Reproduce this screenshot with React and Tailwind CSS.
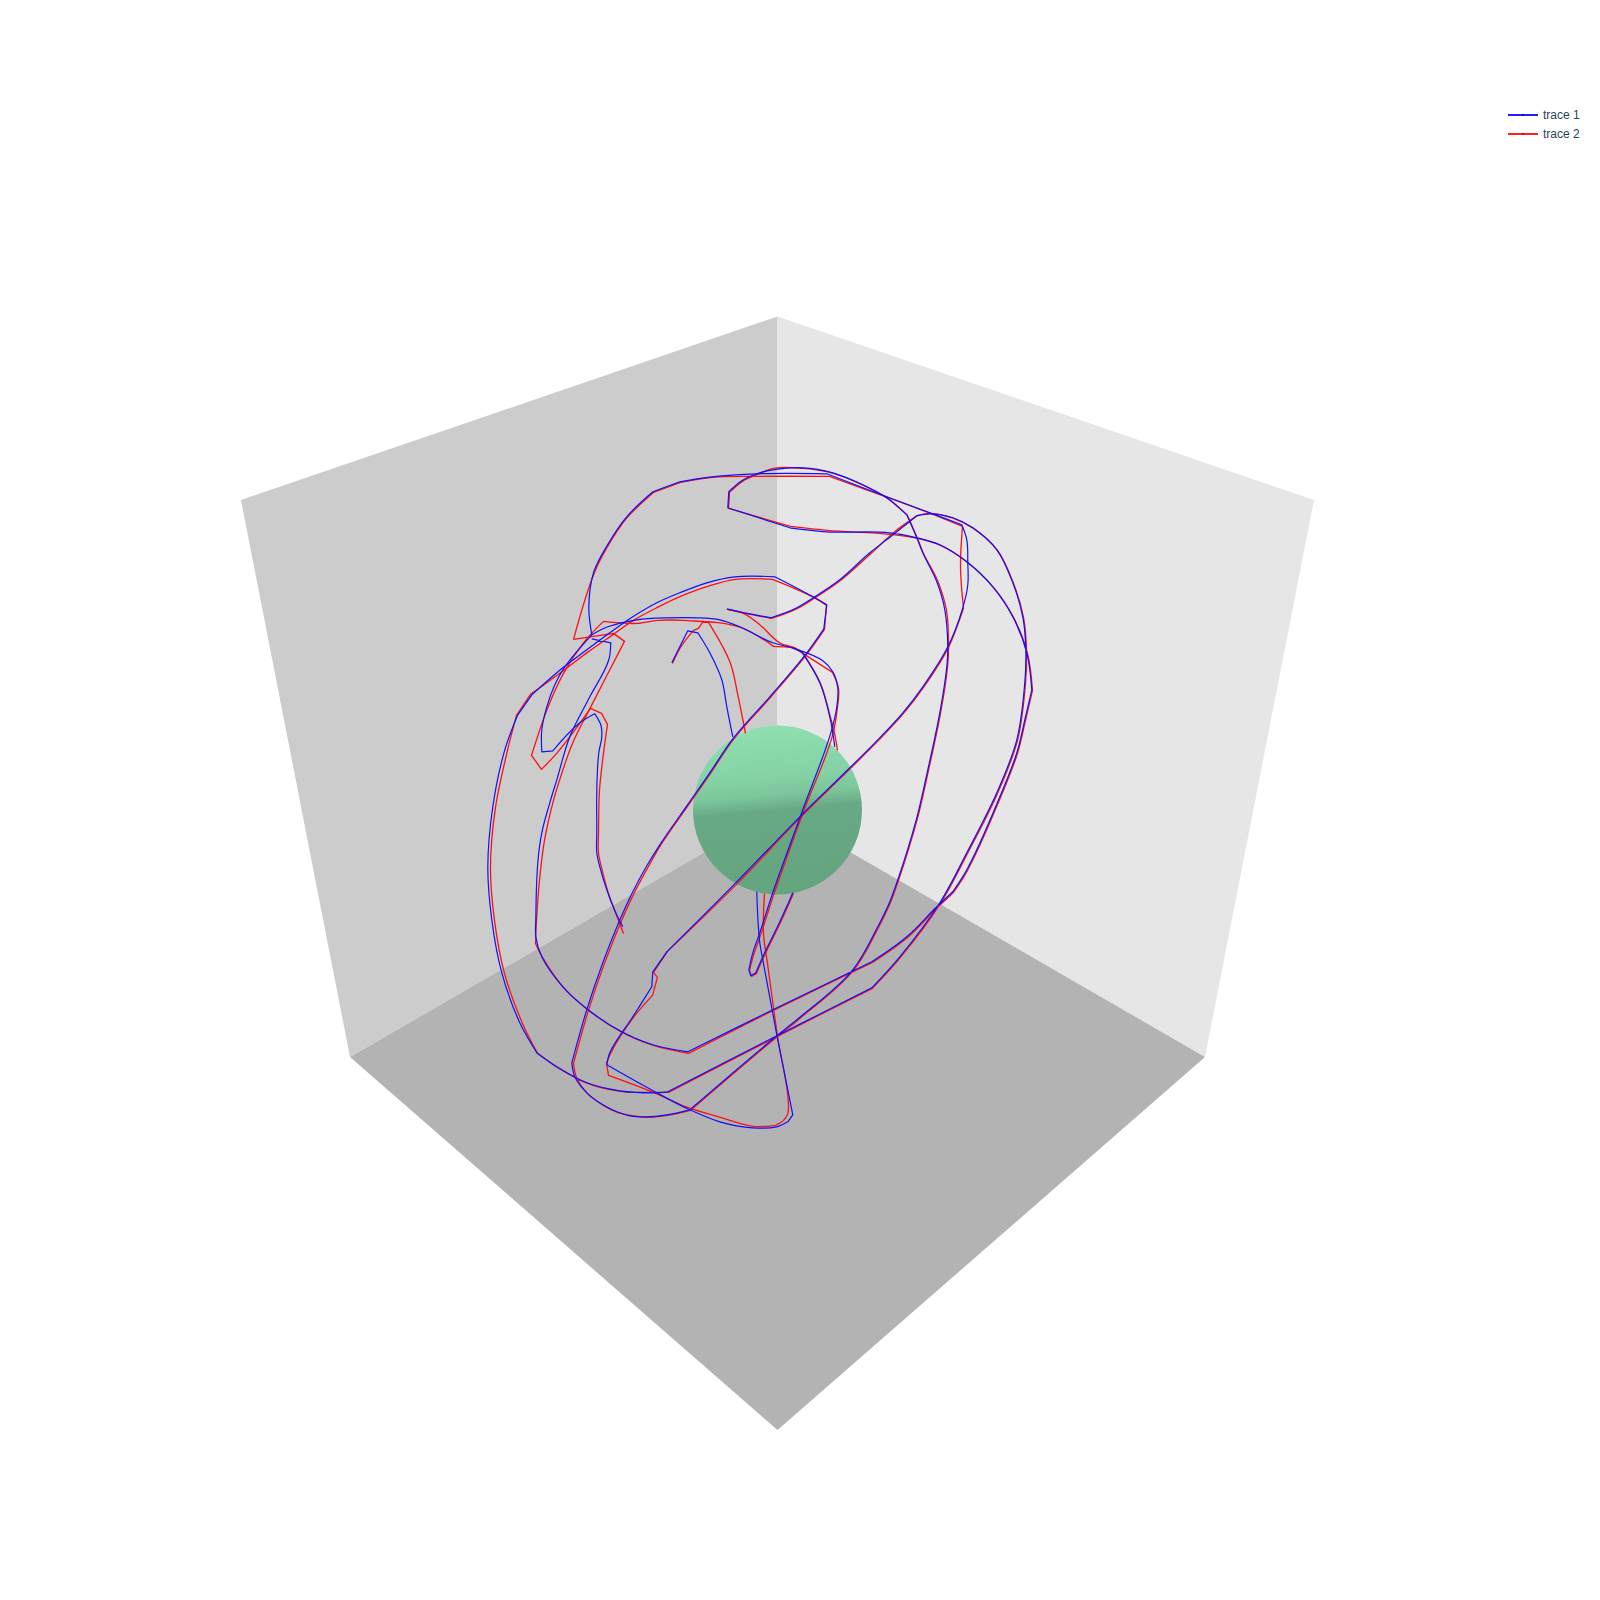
// "!" marks a hard corner in the trace
const blueLines = [
  "623,927 615,911 607,890 600,867 597,853 597,833 597,790 599,753 602,737 601,725 595,714 580,723 553,751 542,752 542,730 547,707 555,685 565,667 592,635 589,607 594,572 606,548 626,518 653,492! 680,482! 712,477 757,474 827,474! 887,497 930,513 962,525 967,540 968,563 968,585 963,608 948,647 923,687 903,713 878,740 850,768 802,815 735,884 667,952! 653,972 652,987 633,1017 610,1053 607,1065 657,1093 690,1110 720,1122 753,1128 777,1127 788,1122 793,1115 777,1035 763,960 760,943 757,892",
  "733,737 727,707 722,680 710,653 698,633 688,631 672,663",
  "592,639 611,643 609,660 590,697 570,737 557,780 550,803 542,833 538,863 536,920 536,937 542,957 563,987 587,1009 620,1031 653,1045 688,1052! 773,1010 872,962! 907,937 937,907 953,892! 967,870 1000,797 1017,753 1025,720 1032,690! 1027,653 1013,617 993,587 967,562 940,545 917,538 890,533 827,532 790,528! 728,508 729,492 742,481 757,474 773,470 803,468 833,473 863,485 887,498 907,515 917,538 923,553 937,582 945,610 948,647 947,667 940,713 928,770 917,818 897,883 890,902 878,927 853,970 797,1020 777,1036 690,1110 667,1115 647,1117 630,1116 617,1112 603,1105 587,1093 575,1077 572,1063 587,1010 603,963 618,925 633,892 647,866 660,845 687,806 710,773 733,739 770,697 807,653 824,629 827,605 815,598 775,577! 735,577 707,583 680,593 657,603 633,617 610,633 587,650 563,668 532,695! 518,715! 505,750 493,807 488,867 492,920 502,973 520,1023 537,1053 557,1067 587,1083 620,1091 653,1093 668,1092! 777,1036 872,988! 900,957 940,903 967,853 997,793 1017,740 1025,683 1026,650 1023,617 1013,583 997,550 973,528 953,518 930,514 917,516 892,536 870,553 840,580 815,597 795,609 771,618 740,612 727,609",
  "592,635 608,627 637,620 667,618 697,618 720,620 740,627 773,643 792,648 823,661 833,672 838,688 837,707 831,733 803,810 773,893 760,933 753,953 749,970 751,976 756,973 763,957 780,922 793,893",
  "792,648 802,652 820,683 830,717 835,747",
];

const redLines = [
  "623,933 615,912 607,890 601,867 598,853 598,833 599,790 603,753 607,724 601,713 590,708 557,752 541,769 531,755 547,708 563,673 585,640 603,621! 637,623 657,620 683,620 740,627 773,646! 793,647! 832,672 838,688 837,707 832,735 803,811 773,895 760,935 753,955 749,970 751,976 756,973 763,957 780,922 793,893",
  "573,639 594,572 606,548 626,518 653,492! 680,482! 712,477 757,476 829,476! 887,497 930,513 962,526 960,567 963,608 948,647 923,687 903,713 878,740 850,768 802,815 735,885 667,951! 653,972 657,977 652,995 633,1017 610,1053 606,1063 608,1075 653,1092 687,1107 720,1117 753,1126 765,1126 775,1125 783,1120 787,1114 788,1108 777,1036 767,963 763,933 764,893",
  "573,639 613,633 624,641 590,707 572,743 559,780 553,800 544,840 539,880 536,920 535,943 542,957 563,987 587,1009 620,1031 653,1045 688,1053! 773,1010 872,962! 907,937 937,907 953,892! 967,870 1000,797 1017,753 1025,720 1032,690! 1027,653 1013,617 993,587 967,562 940,545 917,538 890,534 827,530 790,526! 728,508 729,492 742,481 757,474 773,468 803,468 833,473 863,485 887,498 907,515 917,538 923,553 937,580 946,610 948,647 947,667 940,713 928,770 917,818 897,883 890,902 878,927 853,970 797,1020 777,1036 690,1110 667,1115 647,1117 630,1115 617,1112 603,1105 587,1093 576,1077 573,1063 588,1010 604,963 619,925 634,892 648,866 660,845 687,806 710,773 733,739 770,697 807,653 824,629 826,605 815,598 772,579! 735,579 707,586 680,596 657,607 633,620 610,636 587,652 563,670 530,694! 516,715! 507,750 495,807 490,867 494,920 504,973 522,1023 537,1053 557,1067 587,1083 620,1091 653,1092 668,1092! 777,1036 872,988! 900,957 940,903 967,853 997,793 1017,740 1025,683 1026,650 1023,617 1013,583 997,550 973,528 953,518 930,513 917,515 892,533 877,547 840,580 815,597 795,609 771,618 740,612 727,609",
  "745,733 737,693 730,663 708,622 702,622 698,628 693,630 680,647 672,663",
  "727,609 743,613 760,625 780,643 793,647 802,652 820,683 830,717 834,733 837,750",
];

// rounds the gentle bends, keeps real corners sharp
function toPath(line) {
  const raw = line.split(" ");
  const pts = raw.map((p) => p.replace("!", "").split(",").map(Number));
  const tangent = (i) => {
    if (i === 0 || i === pts.length - 1 || raw[i].endsWith("!")) return null;
    const [ax, ay] = [pts[i][0] - pts[i - 1][0], pts[i][1] - pts[i - 1][1]];
    const [bx, by] = [pts[i + 1][0] - pts[i][0], pts[i + 1][1] - pts[i][1]];
    const turn = Math.abs(Math.atan2(ax * by - ay * bx, ax * bx + ay * by));
    if (turn > (25 * Math.PI) / 180) return null;
    const la = Math.hypot(ax, ay);
    const lb = Math.hypot(bx, by);
    const tx = ax / la + bx / lb;
    const ty = ay / la + by / lb;
    const l = Math.hypot(tx, ty);
    return [tx / l, ty / l];
  };
  let d = `M${pts[0][0]} ${pts[0][1]}`;
  for (let i = 0; i < pts.length - 1; i++) {
    const [x1, y1] = pts[i];
    const [x2, y2] = pts[i + 1];
    const len = Math.hypot(x2 - x1, y2 - y1) / 3;
    const t1 = tangent(i);
    const t2 = tangent(i + 1);
    const c1 = t1 ? [x1 + t1[0] * len, y1 + t1[1] * len] : [x1, y1];
    const c2 = t2 ? [x2 - t2[0] * len, y2 - t2[1] * len] : [x2, y2];
    d += `C${c1[0].toFixed(1)} ${c1[1].toFixed(1)} ${c2[0].toFixed(1)} ${c2[1].toFixed(1)} ${x2} ${y2}`;
  }
  return d;
}

function LegendItem({ label, lineClass, dotClass }) {
  return (
    <div className="flex items-center h-[19px]">
      <div className={`relative w-[30px] h-[2px] ${lineClass}`}>
        <div className={`absolute left-[14px] top-0 w-[2px] h-[2px] ${dotClass}`} />
      </div>
      <span className="ml-[5px] text-[12px] leading-none text-[#2a3f5f]">{label}</span>
    </div>
  );
}

export default function App() {
  return (
    <div className="relative w-[1600px] h-[1600px] overflow-hidden bg-white font-['Liberation_Sans',Arial,sans-serif]">
      <svg width="1600" height="1600" viewBox="0 0 1600 1600" className="block">
        <defs>
          <linearGradient id="sphereShade" gradientUnits="userSpaceOnUse" x1="770" y1="726" x2="785" y2="894">
            <stop offset="0" stopColor="#8fdfb1" />
            <stop offset="0.3" stopColor="#84d2a5" />
            <stop offset="0.41" stopColor="#7cc69b" />
            <stop offset="0.5" stopColor="#68a985" />
            <stop offset="1" stopColor="#64a47f" />
          </linearGradient>
        </defs>
        <polygon points="777.5,316.5 241,500 350,1057 777.5,810" fill="#cccccc" />
        <polygon points="777.5,316.5 1314,500 1205,1057 777.5,810" fill="#e6e6e6" />
        <polygon points="777.5,810 350,1057 777.5,1430 1205,1057" fill="#b3b3b3" />
        <circle cx="777.5" cy="810" r="84.5" fill="url(#sphereShade)" />
        <g transform="translate(0.5 0.4)">
          {redLines.map((pts, i) => (
            <path key={i} d={toPath(pts)} fill="none" stroke="#ff1010" strokeWidth="1.3" strokeLinejoin="round" />
          ))}
        </g>
        <g transform="translate(-0.2 -0.2)">
          {blueLines.map((pts, i) => (
            <path key={i} d={toPath(pts)} fill="none" stroke="#1010ff" strokeWidth="1.2" strokeLinejoin="round" />
          ))}
        </g>
      </svg>
      <div className="absolute left-[1508px] top-[105px] flex flex-col">
        <LegendItem label="trace 1" lineClass="bg-[#1f1fff]" dotClass="bg-[#0808d8]" />
        <LegendItem label="trace 2" lineClass="bg-[#ff1f1f]" dotClass="bg-[#d80808]" />
      </div>
    </div>
  );
}
